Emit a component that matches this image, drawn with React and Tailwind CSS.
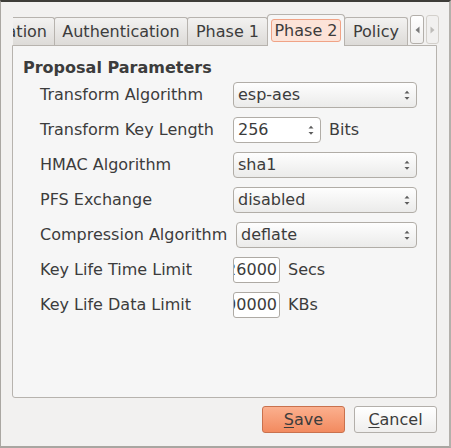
import React from "react";

const F = "font-['DejaVu_Sans','Verdana',sans-serif]";

function UpDown({ color = "#5c5c5c" }) {
  return (
    <svg width="8" height="14" viewBox="0 0 8 14" className="shrink-0">
      <polygon points="1.5,5.5 4,2.8 6.5,5.5" fill={color} />
      <polygon points="1.5,9 4,11.7 6.5,9" fill={color} />
    </svg>
  );
}

function Combo({ value, w = "w-[184px]", extra = "" }) {
  return (
    <div
      className={`flex h-[26px] ${w} ${extra} items-center justify-between rounded-[4px] border border-[#b1ada7] bg-linear-to-b from-[#fefefe] to-[#ebebea] pl-[4px] pr-[5px]`}
    >
      <span className="leading-none">{value}</span>
      <UpDown />
    </div>
  );
}

function Row({ label, children }) {
  return (
    <div className="flex h-[26px] items-center">
      <div className="w-[193px] shrink-0 leading-none">{label}</div>
      {children}
    </div>
  );
}

function Entry({ value, unit }) {
  return (
    <div className="flex items-center">
      <div className="flex h-[26px] w-[47px] items-center justify-end overflow-hidden rounded-[3px] border border-[#aeaaa4] bg-white pr-[2px]">
        <span className="whitespace-nowrap leading-none">{value}</span>
      </div>
      <span className="ml-[8px] leading-none">{unit}</span>
    </div>
  );
}

function Tab({ children, className = "" }) {
  return (
    <div
      className={`-ml-px flex h-[28px] items-center rounded-t-[3px] border border-b-0 border-[#b7b3ae] bg-linear-to-b from-[#f3f2f1] to-[#dddbd8] ${className}`}
    >
      {children}
    </div>
  );
}

export default function App() {
  return (
    <div
      className={`${F} flex h-[448px] w-[451px] flex-col border-t-2 border-r-2 border-b-2 border-l border-t-[#3e3d39] border-r-[#b3b0ab] border-b-[#a9a6a1] border-l-[#aaa7a2] bg-[#f2f1f0] pl-[11px] text-[16px] text-[#3c3c3c]`}
    >
      {/* tab row */}
      <div className="mt-[12px] flex h-[31px] items-end">
        <div className="ml-[1px] flex h-[28px] w-[42px] items-center justify-end overflow-hidden rounded-tr-[3px] border-t border-r border-[#b7b3ae] bg-linear-to-b from-[#f3f2f1] to-[#dddbd8] pr-[7px]">
          <span className="whitespace-nowrap leading-none">ation</span>
        </div>
        <Tab className="w-[134px] justify-center">
          <span className="leading-none">Authentication</span>
        </Tab>
        <Tab className="w-[81px] justify-center">
          <span className="leading-none">Phase 1</span>
        </Tab>
        <div className="relative z-10 -mb-px -ml-px flex h-[32px] w-[78px] items-start justify-center rounded-t-[4px] border border-b-0 border-[#b7b3ae] bg-[#f6f6f6] pt-[4px]">
          <div className="flex h-[23px] w-[70px] items-center justify-center rounded-[3px] border border-[#f0a386] bg-[#fce3d8]">
            <span className="leading-none">Phase 2</span>
          </div>
        </div>
        <Tab className="w-[64px] justify-center">
          <span className="leading-none">Policy</span>
        </Tab>
        <div className="mb-[1px] ml-[2px] flex h-[29px] w-[14px] items-center justify-center rounded-[3px] border border-[#b3afaa] bg-linear-to-b from-[#ffffff] to-[#f0efee]">
          <svg width="5" height="8" viewBox="0 0 5 8">
            <polygon points="4.5,0.5 0.5,4 4.5,7.5" fill="#7a7a7a" />
          </svg>
        </div>
        <div className="mb-[1px] ml-[2px] flex h-[29px] w-[13px] items-center justify-center rounded-[3px] border border-[#d3d0cb] bg-[#f1f0ef]">
          <svg width="5" height="8" viewBox="0 0 5 8">
            <polygon points="0.5,0.5 4.5,4 0.5,7.5" fill="#bdbbb8" />
          </svg>
        </div>
      </div>

      {/* panel */}
      <div className="flex h-[353px] w-[425px] flex-col rounded-b-[3px] border border-[#b7b3ae] bg-[#f6f6f6] pl-[10px] pt-[12px]">
        <div className="flex h-[20px] items-center font-bold leading-none">
          Proposal Parameters
        </div>
        <div className="mt-[4px] flex flex-col gap-[9px] pl-[17px]">
          <Row label="Transform Algorithm">
            <Combo value="esp-aes" />
          </Row>
          <Row label="Transform Key Length">
            <div className="flex items-center">
              <div className="flex h-[26px] w-[88px] items-center justify-between rounded-[4px] border border-[#b1ada7] bg-white pl-[4px] pr-[5px]">
                <span className="leading-none">256</span>
                <UpDown />
              </div>
              <span className="ml-[8px] leading-none">Bits</span>
            </div>
          </Row>
          <Row label="HMAC Algorithm">
            <Combo value="sha1" />
          </Row>
          <Row label="PFS Exchange">
            <Combo value="disabled" />
          </Row>
          <Row label={<span className="whitespace-nowrap">Compression Algorithm</span>}>
            <Combo value="deflate" w="w-[181px]" extra="ml-[3px]" />
          </Row>
          <Row label="Key Life Time Limit">
            <Entry value="26000" unit="Secs" />
          </Row>
          <Row label="Key Life Data Limit">
            <Entry value="100000" unit="KBs" />
          </Row>
        </div>
      </div>

      {/* buttons */}
      <div className="mt-[8px] flex w-[425px] justify-end gap-[9px]">
        <button className="flex h-[27px] w-[83px] items-center justify-center rounded-[3px] border border-[#c9714d] bg-linear-to-b from-[#fbb08e] to-[#f28a5f] leading-none text-[#3c3c3c]">
          <span>
            <span className="underline underline-offset-[2px]">S</span>ave
          </span>
        </button>
        <button className="flex h-[27px] w-[83px] items-center justify-center rounded-[3px] border border-[#b3afaa] bg-linear-to-b from-[#ffffff] to-[#efeeed] leading-none text-[#3c3c3c]">
          <span>
            <span className="underline underline-offset-[2px]">C</span>ancel
          </span>
        </button>
      </div>
    </div>
  );
}
